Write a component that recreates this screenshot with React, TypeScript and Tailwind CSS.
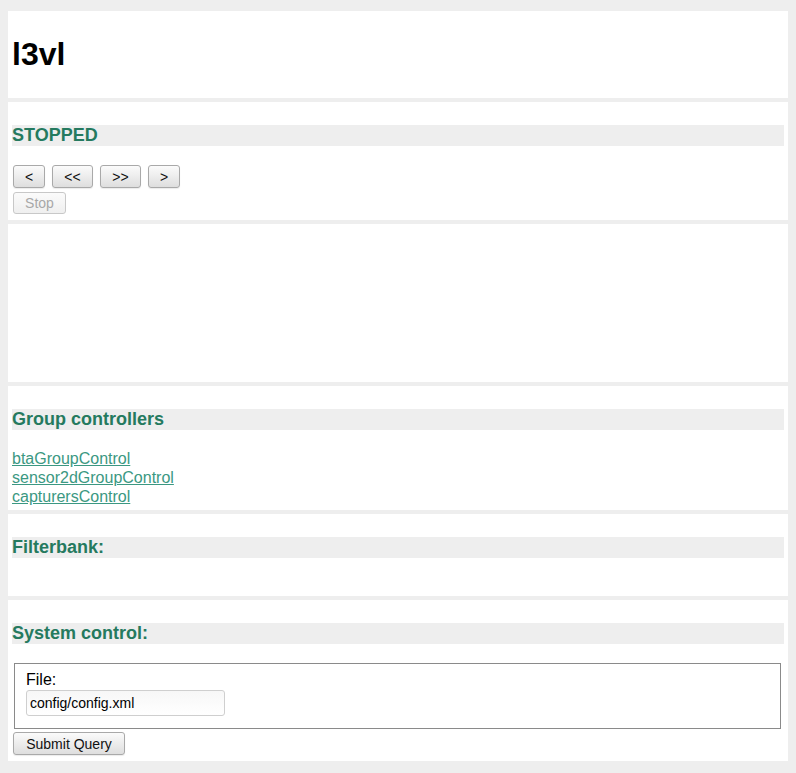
import React from "react";

const btn =
  "h-[23px] rounded-[3px] border border-[#a9a9a9] bg-gradient-to-b from-[#fbfbfb] to-[#dedede] text-[14px] leading-none text-[#111] shadow-[0_1px_1px_rgba(0,0,0,0.08)]";

function Heading({ children }: { children: React.ReactNode }) {
  return (
    <h3 className="my-[19px] bg-[#eeeeee] text-[18px] leading-[21px] font-bold text-[#257a5f]">
      {children}
    </h3>
  );
}

function Section({ children, className = "" }: { children?: React.ReactNode; className?: string }) {
  return <div className={`bg-white p-[4px] flow-root ${className}`}>{children}</div>;
}

export default function App() {
  const links = ["btaGroupControl", "sensor2dGroupControl", "capturersControl"];

  return (
    <div
      className="min-h-[773px] bg-[#eeeeee] px-[8px] pt-[11px] pb-[12px] text-black"
      style={{ fontFamily: '"Liberation Sans", Arial, sans-serif' }}
    >
      <div className="flex flex-col gap-[4px]">
        <Section>
          <h1 className="my-[21px] text-[32px] leading-[37px] font-bold">l3vl</h1>
        </Section>

        <Section>
          <Heading>STOPPED</Heading>
          <div className="ml-[1px] flex gap-[7px]">
            <button className={`${btn} w-[32px]`}>&lt;</button>
            <button className={`${btn} w-[41px]`}>&lt;&lt;</button>
            <button className={`${btn} w-[41px]`}>&gt;&gt;</button>
            <button className={`${btn} w-[32px]`}>&gt;</button>
          </div>
          <div className="ml-[1px] mt-[4px] flex">
            <button
              disabled
              className="h-[22px] w-[53px] rounded-[3px] border border-[#c8c8c8] bg-gradient-to-b from-[#fbfbfb] to-[#efefef] text-[14px] leading-none text-[#a8a8a8]"
            >
              Stop
            </button>
          </div>
          <div className="h-[2px]" />
        </Section>

        <Section className="h-[158px]" />

        <Section>
          <Heading>Group controllers</Heading>
          <div className="flex flex-col text-[16px] leading-[19px]">
            {links.map((l) => (
              <a key={l} href="#" className="self-start text-[#3b9882] underline">
                {l}
              </a>
            ))}
          </div>
        </Section>

        <Section>
          <Heading>Filterbank:</Heading>
          <div className="h-[15px]" />
        </Section>

        <Section>
          <Heading>System control:</Heading>
          <form className="flex flex-col items-start">
            <fieldset className="mx-[2px] w-[767px] border border-[#8a8a8a] px-[11px] pt-[6px] pb-[12px]">
              <div className="text-[16px] leading-[19px]">File:</div>
              <input
                defaultValue="config/config.xml"
                className="mt-[1px] h-[26px] w-[199px] rounded-[3px] border border-[#cfcfcf] bg-gradient-to-b from-[#f7f7f7] to-white px-[3px] text-[14px] text-black outline-none"
              />
            </fieldset>
            <button type="button" className={`${btn} ml-[1px] mt-[3px] mb-[2px] w-[112px]`}>
              Submit Query
            </button>
          </form>
        </Section>
      </div>
    </div>
  );
}
